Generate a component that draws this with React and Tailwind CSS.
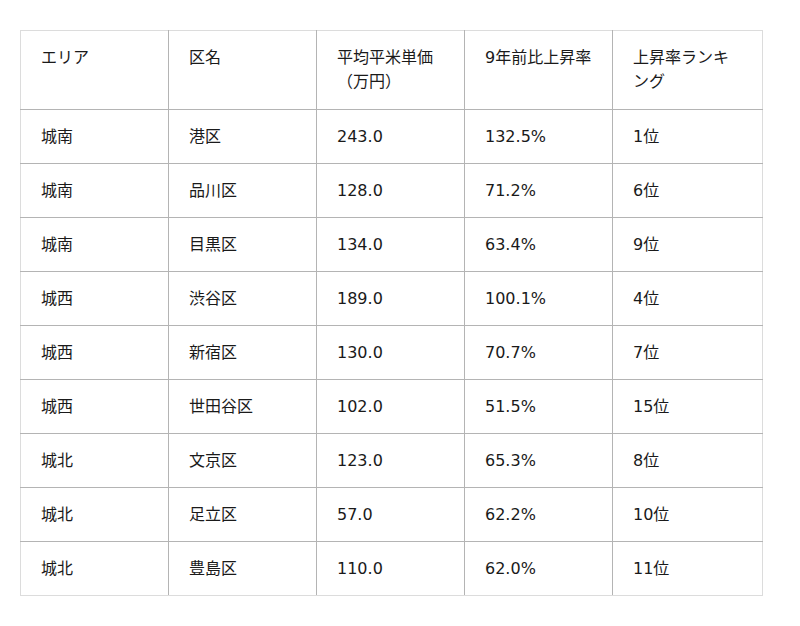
import React from 'react';

const rows = [
    ['城南', '港区', '243.0', '132.5%', '1位'],
    ['城南', '品川区', '128.0', '71.2%', '6位'],
    ['城南', '目黒区', '134.0', '63.4%', '9位'],
    ['城西', '渋谷区', '189.0', '100.1%', '4位'],
    ['城西', '新宿区', '130.0', '70.7%', '7位'],
    ['城西', '世田谷区', '102.0', '51.5%', '15位'],
    ['城北', '文京区', '123.0', '65.3%', '8位'],
    ['城北', '足立区', '57.0', '62.2%', '10位'],
    ['城北', '豊島区', '110.0', '62.0%', '11位'],
];

const headers = ['エリア', '区名', '平均平米単価（万円）', '9年前比上昇率', '上昇率ランキング'];

export default function App() {
    const edge = (i, n) =>
        (i === 0 ? 'border-l-[#dcdcdc] ' : '') + (i === n - 1 ? 'border-r-[#dcdcdc]' : '');

    return (
        <div
            className="bg-white min-h-[626px] pt-[30px] pl-[20px] text-[#1a1a1a]"
            style={{ fontFamily: '"DejaVu Sans", "Noto Sans CJK JP", sans-serif' }}
        >
            <table className="w-[742px] table-fixed border-collapse text-[16px] leading-[24px]">
                <colgroup>
                    <col className="w-[148px]" />
                    <col className="w-[148px]" />
                    <col className="w-[148px]" />
                    <col className="w-[148px]" />
                    <col className="w-[150px]" />
                </colgroup>
                <thead>
                    <tr className="h-[79px]">
                        {headers.map((h, i) => (
                            <th
                                key={i}
                                className={`border border-[#b4b4b4] border-t-[#dcdcdc] align-top text-left font-normal pl-[20px] pt-[15px] ${i === 4 ? 'pr-[18px]' : 'pr-[16px]'} ${edge(i, 5)}`}
                            >
                                {h}
                            </th>
                        ))}
                    </tr>
                </thead>
                <tbody>
                    {rows.map((r, ri) => (
                        <tr key={ri} className="h-[54px]">
                            {r.map((c, i) => (
                                <td
                                    key={i}
                                    className={`border border-[#b4b4b4] align-middle pl-[20px] ${ri === rows.length - 1 ? 'border-b-[#dcdcdc]' : ''} ${edge(i, 5)}`}
                                >
                                    {c}
                                </td>
                            ))}
                        </tr>
                    ))}
                </tbody>
            </table>
        </div>
    );
}
